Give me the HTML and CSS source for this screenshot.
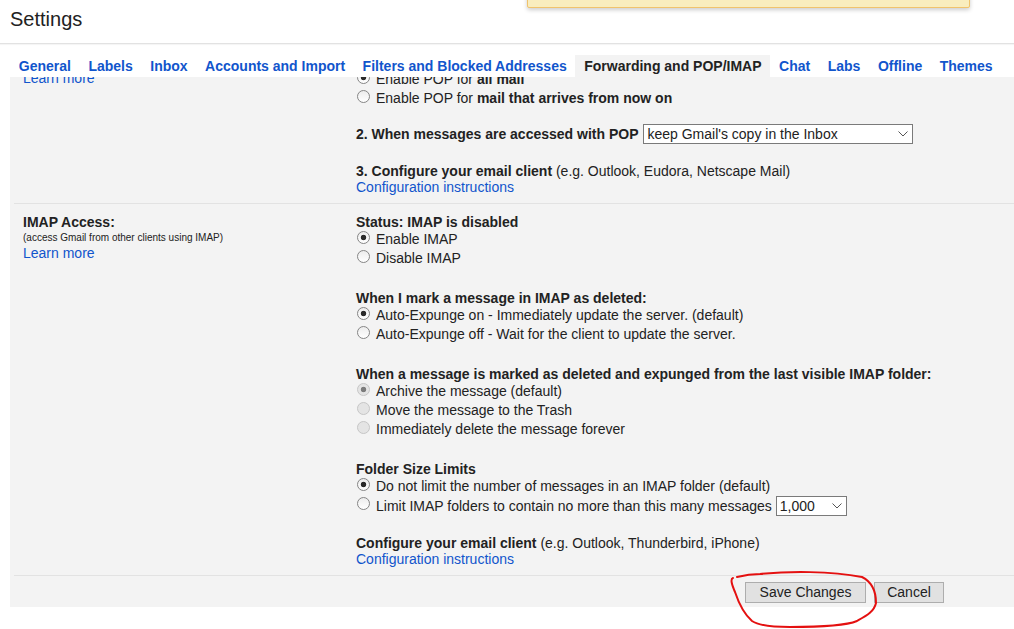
FILE: index.html
```html
<!DOCTYPE html>
<html>
<head>
<meta charset="utf-8">
<title>Settings</title>
<link rel="stylesheet" href="styles.css">
</head>
<body>
<div class="notice"></div>
<header class="top">
  <h1 class="title">Settings</h1>
</header>
<nav class="tabs">
  <a class="tab">General</a>
  <a class="tab">Labels</a>
  <a class="tab">Inbox</a>
  <a class="tab">Accounts and Import</a>
  <a class="tab">Filters and Blocked Addresses</a>
  <a class="tab active">Forwarding and POP/IMAP</a>
  <a class="tab">Chat</a>
  <a class="tab">Labs</a>
  <a class="tab">Offline</a>
  <a class="tab">Themes</a>
</nav>
<main class="panel">
  <div class="scroller">
    <section class="row first">
      <div class="left">
        <a class="link">Learn more</a>
      </div>
      <div class="right">
        <label class="opt"><input type="radio" name="pop" checked><span>Enable POP for <b>all mail</b></span></label>
        <label class="opt"><input type="radio" name="pop"><span>Enable POP for <b>mail that arrives from now on</b></span></label>
        <div class="selrow sel-gap">
          <b>2. When messages are accessed with POP</b>
          <span class="select wide"><span>keep Gmail's copy in the Inbox</span><svg width="10" height="6" viewBox="0 0 10 6"><path d="M0.5 0.5 L5 5 L9.5 0.5" fill="none" stroke="#555" stroke-width="1"/></svg></span>
        </div>
        <div class="hd gap19">3. Configure your email client <span class="norm">(e.g. Outlook, Eudora, Netscape Mail)</span></div>
        <a class="link">Configuration instructions</a>
      </div>
    </section>
    <section class="row">
      <div class="left">
        <div class="hd">IMAP Access:</div>
        <div class="small">(access Gmail from other clients using IMAP)</div>
        <a class="link">Learn more</a>
      </div>
      <div class="right">
        <div class="group">
          <div class="hd">Status: IMAP is disabled</div>
          <label class="opt"><input type="radio" name="imap" checked><span>Enable IMAP</span></label>
          <label class="opt"><input type="radio" name="imap"><span>Disable IMAP</span></label>
        </div>
        <div class="group">
          <div class="hd">When I mark a message in IMAP as deleted:</div>
          <label class="opt"><input type="radio" name="exp" checked><span>Auto-Expunge on - Immediately update the server. (default)</span></label>
          <label class="opt"><input type="radio" name="exp"><span>Auto-Expunge off - Wait for the client to update the server.</span></label>
        </div>
        <div class="group">
          <div class="hd">When a message is marked as deleted and expunged from the last visible IMAP folder:</div>
          <label class="opt"><input type="radio" name="del" checked disabled><span>Archive the message (default)</span></label>
          <label class="opt"><input type="radio" name="del" disabled><span>Move the message to the Trash</span></label>
          <label class="opt"><input type="radio" name="del" disabled><span>Immediately delete the message forever</span></label>
        </div>
        <div class="group">
          <div class="hd">Folder Size Limits</div>
          <label class="opt"><input type="radio" name="lim" checked><span>Do not limit the number of messages in an IMAP folder (default)</span></label>
          <label class="opt selopt"><input type="radio" name="lim"><span>Limit IMAP folders to contain no more than this many messages</span><span class="select narrow"><span>1,000</span><svg width="10" height="6" viewBox="0 0 10 6"><path d="M0.5 0.5 L5 5 L9.5 0.5" fill="none" stroke="#555" stroke-width="1"/></svg></span></label>
        </div>
        <div class="hd gap19">Configure your email client <span class="norm">(e.g. Outlook, Thunderbird, iPhone)</span></div>
        <a class="link">Configuration instructions</a>
      </div>
    </section>
  </div>
  <div class="actions">
    <button class="btn save">Save Changes</button>
    <button class="btn">Cancel</button>
  </div>
</main>
<svg class="scribble" width="160" height="62" viewBox="725 568 160 62">
  <path d="M737 577 C 745 575, 752 574, 760 574 C 790 571, 830 571, 862 577 C 872 582, 876 592, 876 603 C 874 612, 866 616, 857 621 C 845 626, 820 627, 790 627 C 770 627, 758 625, 752 621 C 744 614, 739 604, 735 592 C 732 585, 730 579, 733 578" fill="none" stroke="#e41010" stroke-width="2" stroke-linecap="round" stroke-linejoin="round"/>
</svg>
</body>
</html>
```

FILE: styles.css
```css
html, body {
  margin: 0;
  padding: 0;
  background: #fff;
  overflow: hidden;
  width: 1014px;
  height: 629px;
}
body {
  font-family: Arial, "Liberation Sans", sans-serif;
  font-size: 14px;
  color: #222;
  position: relative;
}
.notice {
  position: absolute;
  left: 527px;
  top: -30px;
  width: 441px;
  height: 36px;
  background: #f9edbe;
  border: 1px solid #f0c36d;
  border-radius: 2px;
  box-shadow: 0 2px 4px rgba(0, 0, 0, 0.2);
}
.top {
  height: 44px;
  border-bottom: 1px solid #e2e2e2;
  box-shadow: 0 1px 1px rgba(0, 0, 0, 0.04);
  box-sizing: border-box;
}
.title {
  margin: 0;
  padding: 8px 0 0 10px;
  font-size: 20px;
  font-weight: normal;
  line-height: 23px;
  color: #222;
}
.tabs {
  display: flex;
  padding: 10px 0 0 10px;
  margin-top: 1px;
  white-space: nowrap;
}
.tab {
  display: block;
  padding: 0 8.75px;
  line-height: 22px;
  font-weight: bold;
  font-size: 14px;
  color: #15c;
}
.tab.active {
  background: #f3f3f3;
  color: #222;
}
.panel {
  margin-left: 10px;
  background: #f3f3f3;
  height: 530px;
  overflow: hidden;
}
.scroller {
  margin-top: -17px;
}
.row {
  display: grid;
  grid-template-columns: 333px 1fr;
  margin-left: 4px;
  padding: 10px 0 8px 9px;
  border-top: 1px solid #e2e2e2;
}
.row.first {
  border-top: 0;
}
.hd {
  font-weight: bold;
  line-height: 16px;
  white-space: nowrap;
}
.norm {
  font-weight: normal;
}
.small {
  font-size: 10px;
  line-height: 14px;
  margin-top: 1px;
}
.link {
  display: block;
  color: #15c;
  line-height: 16px;
  cursor: pointer;
  white-space: nowrap;
}
.opt {
  display: flex;
  align-items: flex-start;
  height: 19px;
  line-height: 19px;
  white-space: nowrap;
}
.opt input {
  -webkit-appearance: none;
  appearance: none;
  flex: none;
  width: 13px;
  height: 13px;
  margin: 1px 6px 0 1px;
  border: 1px solid #858585;
  border-radius: 50%;
  box-sizing: border-box;
  background: linear-gradient(#ececec, #fff);
}
.opt input:checked {
  background: radial-gradient(circle, #2a2a2a 0, #2a2a2a 2.4px, transparent 3.1px), linear-gradient(#ececec, #fff);
}
.opt input:disabled {
  border-color: #c6c6c6;
  background: #e4e4e4;
}
.opt input:disabled:checked {
  background: radial-gradient(circle, #7c7c7c 0, #7c7c7c 2.4px, #e4e4e4 3.1px);
}
.selrow {
  display: flex;
  align-items: center;
  height: 20px;
  white-space: nowrap;
}
.sel-gap {
  margin-top: 16px;
}
.gap19 {
  margin-top: 19px;
}
.select {
  display: flex;
  align-items: center;
  justify-content: space-between;
  box-sizing: border-box;
  height: 20px;
  border: 1px solid #7a7a7a;
  background: #fff;
  padding: 0 4px 0 3px;
  line-height: 18px;
  color: #222;
}
.select svg {
  flex: none;
}
.select.wide {
  width: 270px;
  margin-left: 5px;
}
.select.narrow {
  width: 71px;
  margin-left: 4px;
}
.selopt {
  height: 20px;
  align-items: center;
}
.selopt input {
  align-self: flex-start;
}
.group + .group {
  margin-top: 22px;
}
.actions {
  display: flex;
  gap: 8px;
  margin-left: 4px;
  padding: 6px 0 0 731px;
  border-top: 1px solid #e2e2e2;
}
.btn {
  font-family: Arial, "Liberation Sans", sans-serif;
  font-size: 14px;
  color: #222;
  height: 21px;
  padding: 0;
  background: #e1e1e1;
  border: 1px solid #adadad;
  border-radius: 0;
  width: 70px;
  line-height: 19px;
}
.btn.save {
  width: 121px;
}
.scribble {
  position: absolute;
  left: 725px;
  top: 568px;
}
```
